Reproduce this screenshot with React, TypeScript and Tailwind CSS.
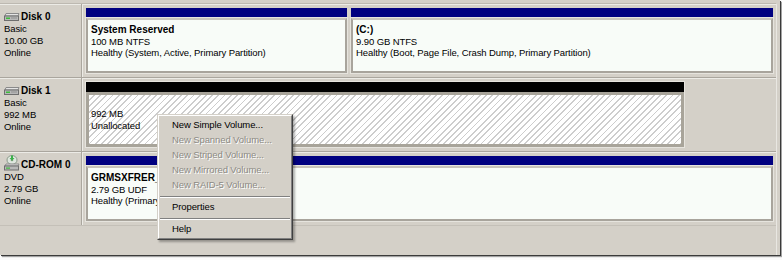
import React from "react";

const font = { fontFamily: "'Liberation Sans', Arial, sans-serif" };

function DiskIcon() {
  return (
    <svg width="16" height="10" viewBox="0 0 16 10" className="mr-[1px] shrink-0">
      <path d="M2 1.5 L15 1.5 L14 4 L1 4 Z" fill="#e4e4e4" stroke="#8a8a8a" strokeWidth="1" />
      <rect x="0.5" y="4" width="14" height="4.5" fill="#b8b8b8" stroke="#6e6e6e" strokeWidth="1" />
      <rect x="2" y="5.5" width="4" height="1.5" fill="#3cbd3c" />
      <rect x="7" y="5.5" width="6" height="1" fill="#8f8f8f" />
    </svg>
  );
}

function CdIcon() {
  return (
    <svg width="16" height="16" viewBox="0 0 16 16" className="mr-[1px] shrink-0">
      <ellipse cx="8" cy="5" rx="5" ry="4.5" fill="#dfe7df" stroke="#8a9a8a" strokeWidth="1" />
      <circle cx="8" cy="5" r="1.3" fill="#7aa07a" />
      <path d="M7 0.5 L9 0.5 L9 3 L10.5 3 L8 5.5 L5.5 3 L7 3 Z" fill="#3cb04a" />
      <path d="M2 9 L15 9 L14 11 L1 11 Z" fill="#e4e4e4" stroke="#8a8a8a" strokeWidth="1" />
      <rect x="0.5" y="11" width="14" height="4" fill="#b8b8b8" stroke="#6e6e6e" strokeWidth="1" />
      <rect x="2" y="12.5" width="4" height="1.2" fill="#3cbd3c" />
    </svg>
  );
}

function Label({ icon, title, lines }: { icon: React.ReactNode; title: string; lines: string[] }) {
  return (
    <div className="w-[82px] shrink-0 border-r border-[#aaa69e] pl-[4px] pt-[7px] leading-[12px] text-black">
      <div className="flex items-center h-[12px]">
        <span className="flex items-end">{icon}</span>
        <span className="text-[10px] font-bold">{title}</span>
      </div>
      {lines.map((l) => (
        <div key={l} className="text-[9.5px] tracking-[-0.1px] h-[12px]">
          {l}
        </div>
      ))}
    </div>
  );
}

function Partition({
  title,
  lines,
  className,
  textClass = "",
}: {
  title: string;
  lines: string[];
  className: string;
  textClass?: string;
}) {
  return (
    <div className={`flex flex-col ${className}`}>
      <div className="h-[10px] bg-[#000080]" />
      <div className="flex-1 border-2 border-t-[#c8c4bc] border-l-[#a8a49c] border-r-[#a8a49c] border-b-[#a8a49c] bg-[#f8fcf8] pl-[3px] pt-[4px] leading-[11.5px] overflow-hidden whitespace-nowrap shadow-[0_0_0_1px_#e6e4de]">
        <div className={`overflow-hidden ${textClass}`}>
          <div className="text-[10px] font-bold h-[11.5px]">{title}</div>
          {lines.map((l) => (
            <div key={l} className="text-[9.5px] tracking-[-0.1px] h-[11.5px]">
              {l}
            </div>
          ))}
        </div>
      </div>
    </div>
  );
}

function MenuItem({ text, disabled }: { text: string; disabled?: boolean }) {
  return (
    <div
      className={`h-[15px] flex items-center pl-[13px] text-[9.5px] tracking-[-0.1px] whitespace-nowrap ${
        disabled ? "text-[#8c8a84] [text-shadow:1px_1px_0_#ffffff]" : "text-black"
      }`}
    >
      {text}
    </div>
  );
}

function Sep() {
  return (
    <div className="h-[7px] flex items-center px-[1px]">
      <div className="w-full border-t border-b border-t-[#808080] border-b-white" />
    </div>
  );
}

export default function App() {
  return (
    <div className="w-[782px] h-[260px] bg-[#fbfbfb] text-black" style={font}>
      <div className="relative w-[780px] h-[255px] bg-[#d4d0c8] pt-[3px] pr-[3px] shadow-[1px_1px_0_#3a3a3a,2px_2px_1px_rgba(0,0,0,0.35)]">
        <div className="h-full border-t border-r border-t-[#bdb9b1] border-r-[#e9e7e2] flex flex-col">
          {/* Disk 0 */}
          <div className="h-[74px] flex border-b border-[#aaa69e] shadow-[inset_0_1px_0_#ecebe6]">
            <Label icon={<DiskIcon />} title="Disk 0" lines={["Basic", "10.00 GB", "Online"]} />
            <div className="flex-1 flex gap-[4px] pl-[4px] pr-[3px] pt-[4px] pb-[4px] shadow-[inset_1px_0_0_#ecebe6]">
              <Partition
                className="w-[261px]"
                title="System Reserved"
                lines={["100 MB NTFS", "Healthy (System, Active, Primary Partition)"]}
              />
              <Partition
                className="flex-1"
                title="(C:)"
                lines={["9.90 GB NTFS", "Healthy (Boot, Page File, Crash Dump, Primary Partition)"]}
              />
            </div>
          </div>

          {/* Disk 1 */}
          <div className="h-[74px] flex border-b border-[#aaa69e] shadow-[inset_0_1px_0_#ecebe6]">
            <Label icon={<DiskIcon />} title="Disk 1" lines={["Basic", "992 MB", "Online"]} />
            <div className="flex-1 flex pl-[4px] pr-[3px] pt-[4px] pb-[4px] shadow-[inset_1px_0_0_#ecebe6]">
              <div className="w-[598px] flex flex-col shadow-[0_0_0_1px_#e6e4de]">
                <div className="h-[10px] bg-black" />
                <div className="flex-1 border-[3px] border-[#a8a49a] bg-[repeating-linear-gradient(135deg,#ffffff_0px,#ffffff_3.2px,#cdcdcd_3.2px,#cdcdcd_4.4px)] pl-[2px] flex flex-col justify-center leading-[11.5px] text-[9.5px] tracking-[-0.1px]">
                  <div className="h-[11.5px]">992 MB</div>
                  <div className="h-[11.5px]">Unallocated</div>
                </div>
              </div>
            </div>
          </div>

          {/* CD-ROM 0 */}
          <div className="h-[74px] flex border-b border-[#c4c0b8] shadow-[inset_0_1px_0_#ecebe6]">
            <div className="w-[82px] shrink-0 border-r border-[#aaa69e] pl-[4px] pt-[3px] leading-[12px]">
              <div className="flex items-end h-[16px]">
                <CdIcon />
                <span className="text-[10px] font-bold leading-[12px]">CD-ROM 0</span>
              </div>
              <div className="text-[9.5px] tracking-[-0.1px] h-[12px]">DVD</div>
              <div className="text-[9.5px] tracking-[-0.1px] h-[12px]">2.79 GB</div>
              <div className="text-[9.5px] tracking-[-0.1px] h-[12px]">Online</div>
            </div>
            <div className="flex-1 flex pl-[4px] pr-[3px] pt-[4px] pb-[4px] shadow-[inset_1px_0_0_#ecebe6]">
              <Partition
                className="flex-1"
                textClass="w-[66px]"
                title="GRMSXFRER_EN_DVD (D:)"
                lines={["2.79 GB UDF", "Healthy (Primary Partition)"]}
              />
            </div>
          </div>
          <div className="flex-1" />
        </div>

        {/* Context menu */}
        <div className="absolute left-[157px] top-[114px] w-[136px] h-[126px] bg-[#d4d0c8] border border-t-[#d4d0c8] border-l-[#d4d0c8] border-r-[#404040] border-b-[#404040] shadow-[2px_2px_2px_rgba(0,0,0,0.3)]">
          <div className="h-full pt-[2px] border border-t-white border-l-white border-r-[#808080] border-b-[#808080]">
            <MenuItem text="New Simple Volume..." />
            <MenuItem text="New Spanned Volume..." disabled />
            <MenuItem text="New Striped Volume..." disabled />
            <MenuItem text="New Mirrored Volume..." disabled />
            <MenuItem text="New RAID-5 Volume..." disabled />
            <Sep />
            <MenuItem text="Properties" />
            <Sep />
            <MenuItem text="Help" />
          </div>
        </div>
      </div>
    </div>
  );
}
